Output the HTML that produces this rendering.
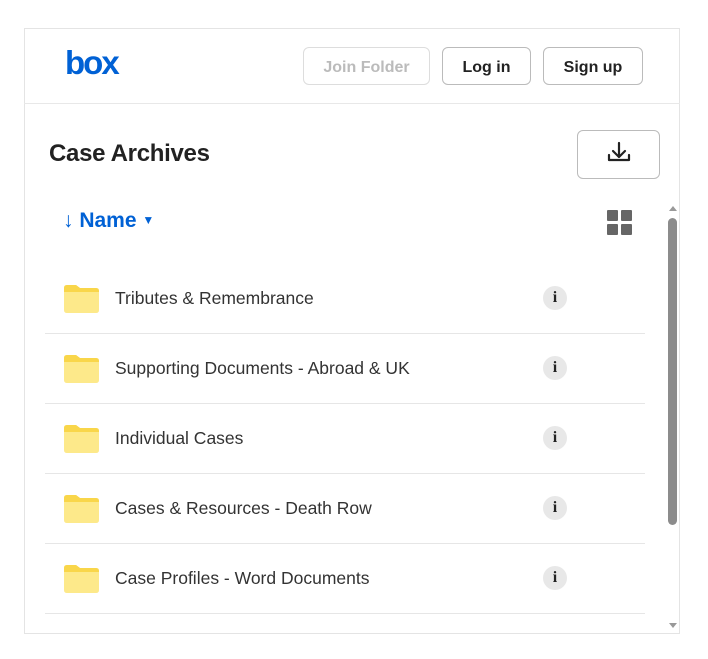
<!DOCTYPE html>
<html><head><style>
body{margin:0;width:708px;height:659px;background:#fff;font-family:"Liberation Sans",sans-serif;position:relative;overflow:hidden}
.frame{position:absolute;left:24px;top:28px;width:656px;height:606px;border:1px solid #e4e4e4;box-sizing:border-box}
.hdr{position:absolute;left:24px;top:103px;width:656px;height:1px;background:#e8e8e8}
.btn{position:absolute;top:47px;height:38px;padding-top:3px;border:1px solid #bbb;border-radius:6px;box-sizing:border-box;font-size:16px;font-weight:bold;color:#222;display:flex;align-items:center;justify-content:center}
.logo{position:absolute;left:65px;top:44px;font-size:33px;font-weight:bold;color:#0061d5;letter-spacing:-2px}
h1{position:absolute;left:49px;top:140px;margin:0;font-size:24px;font-weight:bold;color:#222;letter-spacing:-.3px}
.dl{position:absolute;left:577px;top:130px;width:83px;height:49px;border:1px solid #bbb;border-radius:6px;box-sizing:border-box}
.sort{position:absolute;left:63px;top:209px;font-size:21px;font-weight:bold;color:#0061d5}
.row{position:absolute;left:45px;width:600px;height:70px;border-bottom:1px solid #e6e6e6;box-sizing:border-box}
.row .f{position:absolute;left:17px;top:20px;width:37px;height:29px}
.row .t{position:absolute;left:70px;top:24px;font-size:17.5px;color:#333}
.row .i{position:absolute;left:498px;top:22px;width:24px;height:24px;border-radius:50%;background:#e8e8e8;font-family:"Liberation Serif",serif;font-weight:bold;font-size:16px;text-align:center;line-height:24px;color:#222}
.sb{position:absolute;left:668px;top:218px;width:9px;height:307px;background:#8c8c8c;border-radius:5px}
</style></head><body>
<div class="frame"></div>
<div class="hdr"></div>
<div class="logo">box</div>
<div class="btn" style="left:303px;width:127px;border-color:#ddd;color:#bbb">Join Folder</div>
<div class="btn" style="left:442px;width:89px">Log in</div>
<div class="btn" style="left:543px;width:100px">Sign up</div>
<h1>Case Archives</h1>
<div class="dl"><svg width="83" height="49" viewBox="0 0 83 49"><g fill="none" stroke="#222" stroke-width="2.2" stroke-linecap="round" stroke-linejoin="round"><path d="M41 12v14M35 20l6 6 6-6M31 24v5h20v-5"/></g></svg></div>
<div class="sort">↓ Name <span style="font-size:12px;vertical-align:3px">▼</span></div>
<svg style="position:absolute;left:607px;top:210px" width="25" height="25"><g fill="#666"><rect x="0" y="0" width="11" height="11" rx="1"/><rect x="14" y="0" width="11" height="11" rx="1"/><rect x="0" y="14" width="11" height="11" rx="1"/><rect x="14" y="14" width="11" height="11" rx="1"/></g></svg>
<svg style="position:absolute;left:668px;top:204px" width="10" height="8"><path d="M1 7L5 2 9 7Z" fill="#999"/></svg>
<svg style="position:absolute;left:668px;top:622px" width="10" height="8"><path d="M1 1L5 6 9 1Z" fill="#999"/></svg>
<div class="sb"></div>
<div class="row" style="top:264px"><svg class="f" viewBox="0 0 37 29"><path d="M2 4q0-3 3-3h9l4 3h16q3 0 3 3v19q0 3-3 3H5q-3 0-3-3Z" fill="#fde98a"/><path d="M2 4q0-3 3-3h9l4 3h16q3 0 3 3v1H2Z" fill="#f9d64a"/></svg><div class="t">Tributes &amp; Remembrance</div><div class="i">i</div></div>
<div class="row" style="top:334px"><svg class="f" viewBox="0 0 37 29"><path d="M2 4q0-3 3-3h9l4 3h16q3 0 3 3v19q0 3-3 3H5q-3 0-3-3Z" fill="#fde98a"/><path d="M2 4q0-3 3-3h9l4 3h16q3 0 3 3v1H2Z" fill="#f9d64a"/></svg><div class="t">Supporting Documents - Abroad &amp; UK</div><div class="i">i</div></div>
<div class="row" style="top:404px"><svg class="f" viewBox="0 0 37 29"><path d="M2 4q0-3 3-3h9l4 3h16q3 0 3 3v19q0 3-3 3H5q-3 0-3-3Z" fill="#fde98a"/><path d="M2 4q0-3 3-3h9l4 3h16q3 0 3 3v1H2Z" fill="#f9d64a"/></svg><div class="t">Individual Cases</div><div class="i">i</div></div>
<div class="row" style="top:474px"><svg class="f" viewBox="0 0 37 29"><path d="M2 4q0-3 3-3h9l4 3h16q3 0 3 3v19q0 3-3 3H5q-3 0-3-3Z" fill="#fde98a"/><path d="M2 4q0-3 3-3h9l4 3h16q3 0 3 3v1H2Z" fill="#f9d64a"/></svg><div class="t">Cases &amp; Resources - Death Row</div><div class="i">i</div></div>
<div class="row" style="top:544px"><svg class="f" viewBox="0 0 37 29"><path d="M2 4q0-3 3-3h9l4 3h16q3 0 3 3v19q0 3-3 3H5q-3 0-3-3Z" fill="#fde98a"/><path d="M2 4q0-3 3-3h9l4 3h16q3 0 3 3v1H2Z" fill="#f9d64a"/></svg><div class="t">Case Profiles - Word Documents</div><div class="i">i</div></div>
</body></html>
